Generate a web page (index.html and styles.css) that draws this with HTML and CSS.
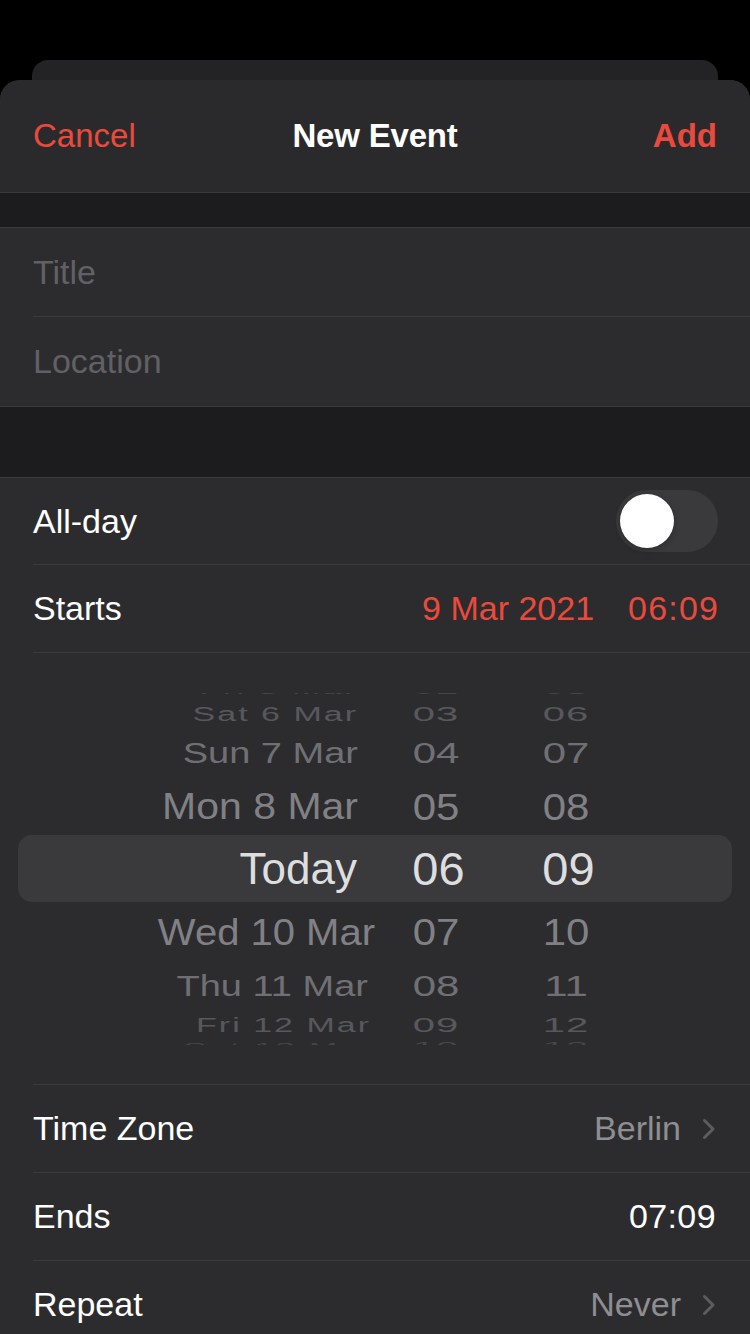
FILE: index.html
```html
<!DOCTYPE html>
<html lang="en">
<head>
<meta charset="utf-8">
<title>New Event</title>
<link rel="stylesheet" href="styles.css">
</head>
<body>
<div class="screen">
  <div class="back-card"></div>
  <div class="sheet">
    <header class="nav">
      <span class="nav-cancel">Cancel</span>
      <span class="nav-title">New Event</span>
      <span class="nav-add">Add</span>
    </header>

    <div class="gap gap-small"></div>

    <section class="group">
      <div class="row row-tall"><div class="row-inner"><span class="placeholder">Title</span></div></div>
      <div class="row row-tall row-last"><div class="row-inner"><span class="placeholder">Location</span></div></div>
    </section>

    <div class="gap gap-large"></div>

    <section class="group group-open">
      <div class="row row-short">
        <div class="row-inner">
          <span class="label">All-day</span>
          <span class="switch"><span class="switch-knob"></span></span>
        </div>
      </div>
      <div class="row">
        <div class="row-inner">
          <span class="label">Starts</span>
          <span class="starts-values"><span class="accent">9 Mar 2021</span><span class="accent time">06:09</span></span>
        </div>
      </div>

      <div class="picker">
        <div class="wheel">
          <div class="wrow l4 first"><span class="wd">Fri 5 Mar</span><span class="wh">02</span><span class="wm">05</span></div>
          <div class="wrow l3 r-sat6"><span class="wd">Sat 6 Mar</span><span class="wh">03</span><span class="wm">06</span></div>
          <div class="wrow l2 r-sun7"><span class="wd">Sun 7 Mar</span><span class="wh">04</span><span class="wm">07</span></div>
          <div class="wrow l1 r-mon8"><span class="wd">Mon 8 Mar</span><span class="wh">05</span><span class="wm">08</span></div>
          <div class="wrow l0"><span class="wd">Today</span><span class="wh">06</span><span class="wm">09</span></div>
          <div class="wrow l1 r-wed10"><span class="wd shift-l">Wed 10 Mar</span><span class="wh">07</span><span class="wm">10</span></div>
          <div class="wrow l2 r-thu11"><span class="wd shift-m">Thu 11 Mar</span><span class="wh">08</span><span class="wm">11</span></div>
          <div class="wrow l3 r-fri12"><span class="wd shift-n">Fri 12 Mar</span><span class="wh">09</span><span class="wm">12</span></div>
          <div class="wrow l4 r-sat13"><span class="wd shift-l">Sat 13 Mar</span><span class="wh">10</span><span class="wm">13</span></div>
        </div>
        <div class="picker-foot"></div>
      </div>

      <div class="row">
        <div class="row-inner">
          <span class="label">Time Zone</span>
          <span class="detail">Berlin<svg class="chev" viewBox="0 0 14 22" width="14" height="22"><path d="M2.5 2.5 L11 11 L2.5 19.5" fill="none" stroke="#5c5c60" stroke-width="3" stroke-linecap="round" stroke-linejoin="round"/></svg></span>
        </div>
      </div>
      <div class="row">
        <div class="row-inner">
          <span class="label">Ends</span>
          <span class="value">07:09</span>
        </div>
      </div>
      <div class="row">
        <div class="row-inner">
          <span class="label">Repeat</span>
          <span class="detail">Never<svg class="chev" viewBox="0 0 14 22" width="14" height="22"><path d="M2.5 2.5 L11 11 L2.5 19.5" fill="none" stroke="#5c5c60" stroke-width="3" stroke-linecap="round" stroke-linejoin="round"/></svg></span>
        </div>
      </div>
    </section>
  </div>
</div>
</body>
</html>
```

FILE: styles.css
```css
* { box-sizing: border-box; }

html, body {
  margin: 0;
  padding: 0;
  background: #000;
}

body {
  font-family: "Liberation Sans", Arial, sans-serif;
  color: #fff;
  width: 750px;
  height: 1334px;
  overflow: hidden;
}

.screen {
  padding-top: 60px;
}

.back-card {
  height: 20px;
  margin: 0 32px;
  background: #232325;
  border-radius: 16px 16px 0 0;
}

.sheet {
  background: #2c2c2e;
  border-radius: 20px 20px 0 0;
  overflow: hidden;
}

.nav {
  height: 113px;
  display: grid;
  grid-template-columns: 1fr auto 1fr;
  align-items: center;
  padding: 0 33px;
  background: #2a2a2c;
  border-bottom: 1px solid #3b3b3e;
  font-size: 33px;
}

.nav-cancel { color: #ea4a3d; justify-self: start; }
.nav-title { font-weight: 700; color: #fff; letter-spacing: -0.2px; }
.nav-add { color: #ea4a3d; font-weight: 700; justify-self: end; }

.gap { background: #1c1c1e; }
.gap-small { height: 34px; }
.gap-large { height: 70px; }

.group {
  border-top: 1px solid #3b3b3e;
  border-bottom: 1px solid #3b3b3e;
}
.group-open { border-bottom: 0; }

.row {
  height: 88px;
  padding-left: 33px;
}
.row-tall { height: 89px; }
.row-short { height: 87px; }

.row-inner {
  height: 100%;
  display: flex;
  align-items: center;
  justify-content: space-between;
  padding-right: 32px;
  border-bottom: 1px solid #3b3b3e;
  font-size: 34px;
}
.row-last .row-inner { border-bottom: 0; }

.placeholder { color: #616165; }
.label { color: #fff; }

.switch {
  width: 102px;
  height: 62px;
  border-radius: 31px;
  background: #3a3a3d;
  padding: 4px;
  display: flex;
}
.switch-knob {
  width: 54px;
  height: 54px;
  border-radius: 50%;
  background: #fff;
  box-shadow: 0 2px 6px rgba(0, 0, 0, 0.25);
}

.starts-values {
  display: flex;
  gap: 34px;
  padding-right: 1px;
  margin-right: -1px;
}
.accent { color: #ea4a3d; }
.time { letter-spacing: 1.2px; margin-right: -1.2px; }

.detail {
  display: flex;
  align-items: center;
  gap: 21px;
  color: #8e8e93;
  padding-right: 2px;
}
.chev { display: block; margin-top: 1px; }

.value { color: #fff; padding-right: 2px; letter-spacing: 0.4px; }

/* Picker */
.picker {
  padding-top: 40px;
}
.wheel {
  height: 352px;
  overflow: hidden;
}
.picker-foot {
  height: 40px;
  margin-left: 33px;
  border-bottom: 1px solid #3b3b3e;
}

.wrow {
  display: grid;
  grid-template-columns: 358px 156px 104px;
  grid-template-rows: 100%;
  align-items: center;
  white-space: nowrap;
  line-height: 1;
}
.wrow span { display: block; }
.wd { text-align: right; }
.wh, .wm { text-align: center; }

.shift-l { margin-right: -17px; }
.shift-m { margin-right: -10px; }
.shift-n { margin-right: -13px; }

/* level 0: selected */
.l0 {
  height: 67px;
  margin: 0 18px;
  grid-template-columns: 340px 156px 104px;
  background: #3a3a3d;
  border-radius: 14px;
  color: #dededf;
}
.l0 .wd { font-size: 44px; margin-right: 1px; }
.l0 .wh, .l0 .wm { font-size: 47px; }
.l0 .wh { padding-left: 5px; }
.l0 .wm { padding-left: 5px; }

/* level 1 */
.l1 { color: #818185; }
.l1 .wd { font-size: 40px; transform: scaleY(0.92); }
.l1 .wh, .l1 .wm { font-size: 42px; transform: scaleY(0.9); }
.r-mon8 { height: 57px; }
.r-mon8 .wd { font-size: 41px; }
.r-wed10 { height: 59px; }

/* level 2 */
.l2 { color: #707074; }
.l2 .wd { font-size: 38px; transform: scaleY(0.76); }
.l2 .wh, .l2 .wm { font-size: 42px; transform: scaleY(0.72); }
.r-sun7 { height: 50px; }
.r-thu11 { height: 49px; }

/* level 3 */
.l3 { color: #58585c; }
.l3 .wd { font-size: 34px; letter-spacing: 2px; transform: scaleY(0.6); }
.l3 .wh, .l3 .wm { font-size: 40px; letter-spacing: 1px; transform: scaleY(0.52); }
.r-sat6 { height: 28px; }
.r-fri12 { height: 29px; }

/* level 4 */
.l4 { color: #46464a; height: 24px; }
.l4 .wd { font-size: 34px; letter-spacing: 2.5px; transform: scaleY(0.34); }
.l4 .wh, .l4 .wm { font-size: 40px; letter-spacing: 1px; transform: scaleY(0.3); }
.l4.first { margin-top: -13px; height: 20px; }
.l4.r-sat13 { height: 16px; }
```
